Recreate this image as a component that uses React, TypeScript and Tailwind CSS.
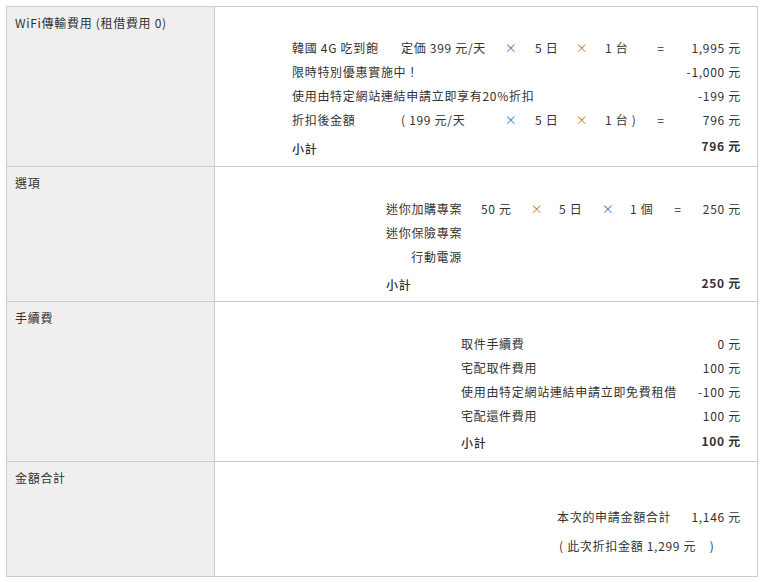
const font = "font-['Noto_Sans_CJK_TC','Noto_Sans',sans-serif]";

function Times({ c }: { c: "blue" | "orange" }) {
    return <span className={c === "blue" ? "text-[#2f86cf]" : "text-[#c08a2e]"}>×</span>;
}

function Section({
    title,
    height,
    last,
    children,
}: {
    title: string;
    height: string;
    last?: boolean;
    children: React.ReactNode;
}) {
    return (
        <div className={`flex ${height} ${last ? "" : "border-b border-[#cccccc]"}`}>
            <div className="w-[208px] shrink-0 bg-[#efefef] border-r border-[#cccccc] pl-[8px] pt-[4px] leading-[24px]">
                {title}
            </div>
            <div className="flex-1 flex justify-end pr-[16px]">{children}</div>
        </div>
    );
}

export default function App() {
    return (
        <div className={`${font} text-[12px] tracking-[0.7px] text-[#333333] bg-white w-[763px] h-[582px] pt-[6px] pl-[6px]`}>
            <div className="w-[752px] h-[571px] border border-[#cccccc] flex flex-col">
                {/* WiFi */}
                <Section title="WiFi傳輸費用 (租借費用 0)" height="h-[160px]">
                    <div className="pt-[29px] grid grid-cols-[109px_96px_28px_46px_22px_54px_28px_66px] auto-rows-[24px] items-center whitespace-nowrap">
                        <span>韓國 4G 吃到飽</span>
                        <span>定価 399 元/天</span>
                        <span className="text-center"><Times c="blue" /></span>
                        <span className="pl-[10px]">5 日</span>
                        <span className="text-center"><Times c="orange" /></span>
                        <span className="pl-[12px]">1 台</span>
                        <span className="text-center">=</span>
                        <span className="text-right">1,995 元</span>

                        <span className="col-span-7">限時特別優惠實施中！</span>
                        <span className="text-right">-1,000 元</span>

                        <span className="col-span-7">使用由特定網站連結申請立即享有20%折扣</span>
                        <span className="text-right">-199 元</span>

                        <span>折扣後金額</span>
                        <span>( 199 元/天</span>
                        <span className="text-center"><Times c="blue" /></span>
                        <span className="pl-[10px]">5 日</span>
                        <span className="text-center"><Times c="orange" /></span>
                        <span className="pl-[12px]">1 台 )</span>
                        <span className="text-center">=</span>
                        <span className="text-right">796 元</span>

                        <span className="col-span-7 mt-[9px] font-medium">小計</span>
                        <span className="text-right mt-[4px] font-semibold">796 元</span>
                    </div>
                </Section>

                {/* 選項 */}
                <Section title="選項" height="h-[135px]">
                    <div className="pt-[30px] grid grid-cols-[76px_61px_28px_46px_22px_46px_26px_50px] auto-rows-[24px] items-center whitespace-nowrap">
                        <span className="text-right">迷你加購專案</span>
                        <span className="pl-[19px]">50 元</span>
                        <span className="text-center"><Times c="orange" /></span>
                        <span className="pl-[8px]">5 日</span>
                        <span className="text-center"><Times c="blue" /></span>
                        <span className="pl-[11px]">1 個</span>
                        <span className="text-center">=</span>
                        <span className="text-right">250 元</span>

                        <span className="text-right">迷你保險專案</span>
                        <span className="col-span-7" />

                        <span className="text-right">行動電源</span>
                        <span className="col-span-7" />

                        <span className="col-span-7 mt-[8px] font-medium">小計</span>
                        <span className="text-right mt-[4px] font-semibold">250 元</span>
                    </div>
                </Section>

                {/* 手續費 */}
                <Section title="手續費" height="h-[160px]">
                    <div className="pt-[30px] grid grid-cols-[230px_50px] auto-rows-[24px] items-center whitespace-nowrap">
                        <span>取件手續費</span>
                        <span className="text-right">0 元</span>
                        <span>宅配取件費用</span>
                        <span className="text-right">100 元</span>
                        <span>使用由特定網站連結申請立即免費租借</span>
                        <span className="text-right">-100 元</span>
                        <span>宅配還件費用</span>
                        <span className="text-right">100 元</span>
                        <span className="mt-[6px] font-medium">小計</span>
                        <span className="text-right mt-[2px] font-semibold">100 元</span>
                    </div>
                </Section>

                {/* 金額合計 */}
                <Section title="金額合計" height="flex-1" last>
                    <div className="pt-[43px] grid grid-cols-[134px_50px] auto-rows-[24px] items-center whitespace-nowrap">
                        <span>本次的申請金額合計</span>
                        <span className="text-right">1,146 元</span>
                        <span className="col-span-2 mt-[10px] pl-[2px]">( 此次折扣金額 1,299 元&nbsp;&nbsp;&nbsp;&nbsp;)</span>
                    </div>
                </Section>
            </div>
        </div>
    );
}
